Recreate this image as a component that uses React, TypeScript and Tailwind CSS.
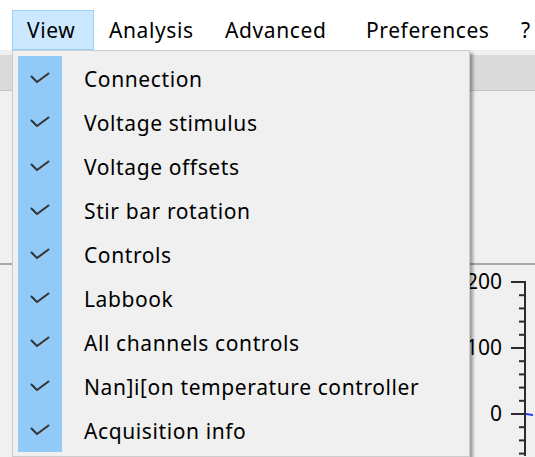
import React from 'react';

const menuBar = [
  { label: 'View', w: 'w-[82px]' },
  { label: 'Analysis', w: 'w-[116px]' },
  { label: 'Advanced', w: 'w-[141px]' },
  { label: 'Preferences', w: 'w-[155px]' },
  { label: '?', w: 'w-[40px]' },
];

const viewItems = [
  'Connection',
  'Voltage stimulus',
  'Voltage offsets',
  'Stir bar rotation',
  'Controls',
  'Labbook',
  'All channels controls',
  'Nan]i[on temperature controller',
  'Acquisition info',
];

const Check = () => (
  <svg width="20" height="12" viewBox="0 0 20 12" fill="none">
    <path d="M1.5 4.5 L7 10 L18.5 1.5" stroke="#333333" strokeWidth="2" strokeLinecap="round" strokeLinejoin="round" />
  </svg>
);

// y axis of the plot behind the menu: major ticks every 66px, 5 subdivisions
const AxisTicks = () => {
  const ticks = [];
  for (let i = 0; i < 14; i++) {
    const y = 17 + i * 13.2;
    const major = i % 5 === 0;
    ticks.push(
      <line key={i} x1={major ? 0 : 8} y1={y} x2={14} y2={y} stroke="#2b2b2b" strokeWidth="2" />
    );
  }
  return (
    <svg width="22" height="191" viewBox="0 0 22 191" className="block">
      {ticks}
      <line x1="14" y1="16" x2="14" y2="191" stroke="#2b2b2b" strokeWidth="2" />
      <line x1="15" y1="149" x2="22" y2="150" stroke="#1f3cff" strokeWidth="2" />
    </svg>
  );
};

export default function App() {
  return (
    <div
      className="relative w-[535px] h-[457px] overflow-hidden bg-[#f0f0f0] text-[21px] tracking-[0.6px] text-black"
      style={{ fontFamily: '"Noto Sans", "Open Sans", sans-serif' }}
    >
      {/* menu bar */}
      <div className="h-[50px] bg-white flex items-start pt-[10px] pl-[12px] whitespace-nowrap">
        {menuBar.map((m, i) => (
          <div
            key={m.label}
            className={
              m.w +
              ' shrink-0 h-[40px] flex items-center pl-[14px] pt-[1px] border leading-none ' +
              (i === 0 ? 'bg-[#cce8ff] border-[#99d1ff]' : 'border-transparent')
            }
          >
            {m.label}
          </div>
        ))}
      </div>

      {/* window content behind the menu */}
      <div className="pt-[5px]">
        <div className="h-[36px] bg-[#dadada] border-b border-[#c4c4c4]" />
        <div className="h-[174px] border-b-2 border-[#a8a8a8]" />
        <div className="flex justify-end pr-[2px]">
          <div className="flex flex-col items-end leading-none tracking-normal pt-[6px] pr-[9px]">
            <span className="h-[66px]">200</span>
            <span className="h-[66px]">100</span>
            <span className="h-[66px]">0</span>
          </div>
          <AxisTicks />
        </div>
      </div>

      {/* open View dropdown */}
      <div className="absolute left-[12px] top-[50px] w-[458px] h-[407px] bg-[#f0f0f0] border border-[#cccccc] shadow-[3px_3px_3px_rgba(0,0,0,0.35)] pl-[5px] pt-[5px]">
        <div className="flex flex-col">
          {viewItems.map((item) => (
            <div key={item} className="h-[44px] flex items-center">
              <div className="w-[44px] h-full bg-[#91c9f7] flex items-center justify-center">
                <Check />
              </div>
              <span className="pl-[22px] pt-[3px] whitespace-nowrap">{item}</span>
            </div>
          ))}
        </div>
      </div>
    </div>
  );
}
